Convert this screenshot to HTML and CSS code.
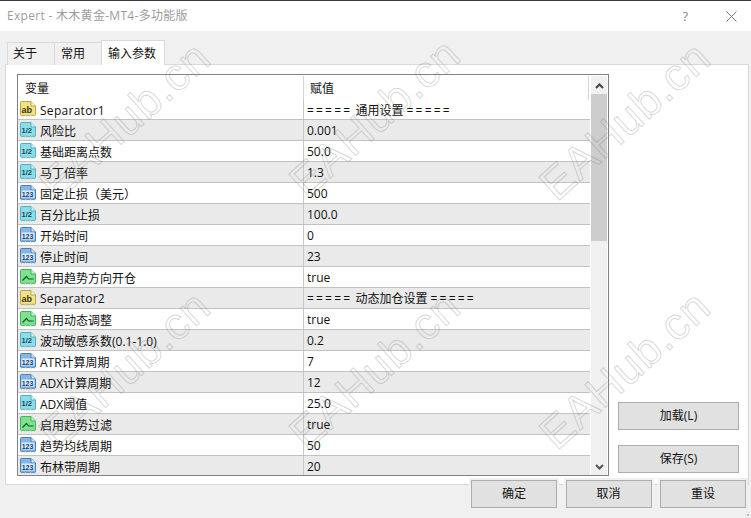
FILE: index.html
```html
<!DOCTYPE html>
<html lang="zh-CN">
<head>
<meta charset="utf-8">
<title>Expert - 木木黄金-MT4-多功能版</title>
<link rel="stylesheet" href="styles.css">
</head>
<body>
<svg class="defs" width="0" height="0" aria-hidden="true">
  <symbol id="ic-str" viewBox="0 0 16 16">
    <path d="M.5 1.5a1 1 0 0 1 1-1H11L15.5 5v9l-1.2.8-1.3-.8-1.3.8-1.2-.8-1.3.8-1.2-.8-1.3.8-1.2-.8-1.3.8-1.2-.8-1.3.8-1.2-.8z" fill="#efe288" stroke="#b9a83f"/>
    <path d="M11 .5V5h4.5" fill="#fff8c8" stroke="#b9a83f"/>
    <text x="1.6" y="11.6" class="ic-t" fill="#3c3410">ab</text>
  </symbol>
  <symbol id="ic-dbl" viewBox="0 0 16 16">
    <path d="M.5 1.5a1 1 0 0 1 1-1H11L15.5 5v9l-1.2.8-1.3-.8-1.3.8-1.2-.8-1.3.8-1.2-.8-1.3.8-1.2-.8-1.3.8-1.2-.8-1.3.8-1.2-.8z" fill="#8fdbe6" stroke="#4fb2c4"/>
    <path d="M11 .5V5h4.5" fill="#d4f6fb" stroke="#4fb2c4"/>
    <text x="1.6" y="10.8" class="ic-t ic-s" fill="#0f4a58">1/2</text>
  </symbol>
  <symbol id="ic-int" viewBox="0 0 16 16">
    <path d="M.5 1.5a1 1 0 0 1 1-1H11L15.5 5v9l-1.2.8-1.3-.8-1.3.8-1.2-.8-1.3.8-1.2-.8-1.3.8-1.2-.8-1.3.8-1.2-.8-1.3.8-1.2-.8z" fill="#86b6e6" stroke="#4a80b6"/>
    <path d="M11 .5V5h4.5" fill="#cfe4f8" stroke="#4a80b6"/>
    <rect x="1.5" y="5.5" width="13" height="7" fill="#dcebf9"/>
    <text x="1.7" y="11.8" class="ic-t ic-n" fill="#123d70">123</text>
  </symbol>
  <symbol id="ic-bool" viewBox="0 0 16 16">
    <path d="M.5 1.5a1 1 0 0 1 1-1H11L15.5 5v9l-1.2.8-1.3-.8-1.3.8-1.2-.8-1.3.8-1.2-.8-1.3.8-1.2-.8-1.3.8-1.2-.8-1.3.8-1.2-.8z" fill="#7fe08f" stroke="#45b35a"/>
    <path d="M11 .5V5h4.5" fill="#c8f5d0" stroke="#45b35a"/>
    <path d="M2.5 11.5l4-4 2 2.5h5" fill="none" stroke="#0d5a22" stroke-width="1.2"/>
  </symbol>
</svg>

<div class="window">
  <header class="titlebar">
    <span class="title">Expert - 木木黄金-MT4-多功能版</span>
    <span class="help">?</span>
    <svg class="close" width="11" height="11" viewBox="0 0 11 11"><path d="M.5.5l10 10M10.5.5l-10 10" stroke="#777" fill="none"/></svg>
  </header>

  <nav class="tabs">
    <span class="tab">关于</span>
    <span class="tab">常用</span>
    <span class="tab active">输入参数</span>
  </nav>

  <section class="panel">
    <div class="grid">
      <div class="rows">
        <div class="head"><span class="h-name">变量</span><span class="h-val">赋值</span></div>
        <div class="row"><span class="name"><svg class="ic"><use href="#ic-str"/></svg><span class="sep">Separator1</span></span><span class="val"><span class="eq">=====</span> 通用设置 <span class="eq">=====</span></span></div>
        <div class="row"><span class="name"><svg class="ic"><use href="#ic-dbl"/></svg>风险比</span><span class="val">0.001</span></div>
        <div class="row"><span class="name"><svg class="ic"><use href="#ic-dbl"/></svg>基础距离点数</span><span class="val">50.0</span></div>
        <div class="row"><span class="name"><svg class="ic"><use href="#ic-dbl"/></svg>马丁倍率</span><span class="val">1.3</span></div>
        <div class="row"><span class="name"><svg class="ic"><use href="#ic-int"/></svg>固定止损（美元）</span><span class="val">500</span></div>
        <div class="row"><span class="name"><svg class="ic"><use href="#ic-dbl"/></svg>百分比止损</span><span class="val">100.0</span></div>
        <div class="row"><span class="name"><svg class="ic"><use href="#ic-int"/></svg>开始时间</span><span class="val">0</span></div>
        <div class="row"><span class="name"><svg class="ic"><use href="#ic-int"/></svg>停止时间</span><span class="val">23</span></div>
        <div class="row"><span class="name"><svg class="ic"><use href="#ic-bool"/></svg>启用趋势方向开仓</span><span class="val">true</span></div>
        <div class="row"><span class="name"><svg class="ic"><use href="#ic-str"/></svg><span class="sep">Separator2</span></span><span class="val"><span class="eq">=====</span> 动态加仓设置 <span class="eq">=====</span></span></div>
        <div class="row"><span class="name"><svg class="ic"><use href="#ic-bool"/></svg>启用动态调整</span><span class="val">true</span></div>
        <div class="row"><span class="name"><svg class="ic"><use href="#ic-dbl"/></svg>波动敏感系数(0.1-1.0)</span><span class="val">0.2</span></div>
        <div class="row"><span class="name"><svg class="ic"><use href="#ic-int"/></svg>ATR计算周期</span><span class="val">7</span></div>
        <div class="row"><span class="name"><svg class="ic"><use href="#ic-int"/></svg>ADX计算周期</span><span class="val">12</span></div>
        <div class="row"><span class="name"><svg class="ic"><use href="#ic-dbl"/></svg>ADX阈值</span><span class="val">25.0</span></div>
        <div class="row"><span class="name"><svg class="ic"><use href="#ic-bool"/></svg>启用趋势过滤</span><span class="val">true</span></div>
        <div class="row"><span class="name"><svg class="ic"><use href="#ic-int"/></svg>趋势均线周期</span><span class="val">50</span></div>
        <div class="row"><span class="name"><svg class="ic"><use href="#ic-int"/></svg>布林带周期</span><span class="val">20</span></div>
      </div>
      <div class="scroll">
        <span class="sb-btn"><svg width="9" height="6" viewBox="0 0 9 6"><path d="M1 5l3.5-3.5L8 5" fill="none" stroke="#444" stroke-width="2"/></svg></span>
        <span class="thumb"></span>
        <span class="track"></span>
        <span class="sb-btn"><svg width="9" height="6" viewBox="0 0 9 6"><path d="M1 1l3.5 3.5L8 1" fill="none" stroke="#555" stroke-width="2"/></svg></span>
      </div>
    </div>
    <div class="side">
      <button class="btn side-btn">加载(L)</button>
      <button class="btn side-btn">保存(S)</button>
    </div>
  </section>

  <footer class="footer">
    <button class="btn foot-btn">确定</button>
    <button class="btn foot-btn">取消</button>
    <button class="btn foot-btn">重设</button>
  </footer>

  <span class="grip"></span>

  <div class="marks" aria-hidden="true">
    <span class="mark m1">EAHub.cn</span>
    <span class="mark m2">EAHub.cn</span>
    <span class="mark m3">EAHub.cn</span>
    <span class="mark m4">EAHub.cn</span>
    <span class="mark m5">EAHub.cn</span>
    <span class="mark m6">EAHub.cn</span>
  </div>
</div>
</body>
</html>
```
FILE: styles.css
```css
* { box-sizing: border-box; }
html, body { margin: 0; padding: 0; }
body {
  font-family: "Open Sans", "Noto Sans CJK SC", sans-serif;
  font-size: 12px;
  color: #111;
  background: #f0f0f0;
}
.defs { position: absolute; }
.window {
  position: relative;
  width: 751px;
  height: 518px;
  overflow: hidden;
  display: flex;
  flex-direction: column;
  background: #f0f0f0;
  border-top: 1px solid #3a3d42;
}
.titlebar {
  height: 30px;
  flex: none;
  background: #fff;
  display: flex;
  align-items: center;
  padding: 0 14px 0 7px;
}
.title { flex: 1; font-size: 12px; letter-spacing: .3px; color: #9c9c9c; line-height: 30px; }
.help { color: #8a8a8a; font-size: 13px; margin-right: 38px; }
.close { display: block; }

.tabs {
  flex: none;
  height: 34px;
  padding: 9px 0 0 7px;
  display: flex;
  align-items: flex-start;
  position: relative;
  z-index: 1;
}
.tab {
  width: 48px;
  height: 23px;
  margin-top: 2px;
  padding-left: 6px;
  border: 1px solid #d9d9d9;
  border-bottom: none;
  line-height: 21px;
  margin-right: -1px;
  background: #f0f0f0;
}
.tab:first-child { padding-left: 5px; }
.tab.active {
  width: 64px;
  height: 25px;
  margin-top: 0;
  padding-left: 6px;
  background: #fff;
  line-height: 25px;
}

.panel {
  flex: none;
  height: 421px;
  margin: -1px 2px 0 5px;
  border: 1px solid #d9d9d9;
  background: #fff;
  display: flex;
  padding: 9px 0 0 11px;
}
.grid {
  width: 592px;
  height: 402px;
  border: 1px solid #82828c;
  display: flex;
  overflow: hidden;
  flex: none;
  padding-right: 1px;
}
.rows { width: 572px; flex: none; overflow: hidden; }
.head {
  display: flex;
  height: 25px;
  border-top: 1px solid #fff;
  line-height: 26px;
}
.h-name { width: 285px; padding-left: 7px; flex: none; }
.h-val {
  flex: 1;
  padding-left: 6px;
  border-left: 1px solid #d4d4d4;
  border-right: 1px solid #d4d4d4;
  margin-right: 1px;
}
.row {
  display: flex;
  height: 21px;
  border-bottom: 1px solid #c2c2c2;
}
.row:nth-child(odd) { background: #eaeaea; }
.row:nth-child(2) { height: 20px; }
.name {
  width: 285px;
  flex: none;
  display: flex;
  align-items: center;
  padding: 1px 0 0 2px;
  white-space: nowrap;
}
.ic { position: relative; top: -1px; width: 16px; height: 16px; margin-right: 4px; flex: none; }
.val {
  flex: 1;
  padding: 2px 0 0 3px;
  line-height: 18px;
  border-left: 1px solid #c8c8c8;
  white-space: nowrap;
}
.sep { letter-spacing: .28px; }
.eq { letter-spacing: 2.2px; }
.ic-t { font: 700 9px "Liberation Sans", sans-serif; }
.ic-s { font-size: 7.5px; }
.ic-n { font-size: 7px; }

.scroll {
  width: 16px;
  margin-left: 1px;
  padding-top: 1px;
  display: flex;
  flex-direction: column;
  background: #f0f0f0;
  border-top: 1px solid #fff;
}
.sb-btn { height: 17px; flex: none; display: flex; align-items: center; justify-content: center; }
.thumb { height: 147px; flex: none; background: #cdcdcd; }
.track { flex: 1; }

.btn {
  font: inherit;
  color: #111;
  background: #e1e1e1;
  border: 1px solid #adadad;
  padding: 0 0 2px;
  display: block;
}
.side {
  width: 121px;
  margin-left: 9px;
  padding-top: 328px;
  display: flex;
  flex-direction: column;
  gap: 15px;
}
.side-btn { width: 121px; height: 28px; flex: none; }
.footer {
  flex: none;
  margin-top: -5px;
  padding-left: 471px;
  display: flex;
  gap: 8.5px;
  position: relative;
}
.foot-btn { width: 86px; height: 28px; box-shadow: 0 0 0 2px #f0f0f0; }
.grip {
  position: absolute;
  right: 1px;
  bottom: 1px;
  width: 6px;
  height: 6px;
  background: radial-gradient(circle at 1px 1px, #bdbdbd 1px, transparent 1px) 0 0 / 3px 3px;
  clip-path: polygon(100% 0, 100% 100%, 0 100%);
}

.marks { position: absolute; inset: 0; pointer-events: none; z-index: 2; }
.mark {
  position: absolute;
  width: 240px;
  margin: -30px 0 0 -120px;
  text-align: center;
  font: 45px/60px "Liberation Sans", sans-serif;
  letter-spacing: 1px;
  color: transparent;
  -webkit-text-stroke: 1px rgba(120, 120, 120, .3);
  transform: rotate(-42deg);
}
.m1 { left: 125px; top: 120px; }
.m2 { left: 375px; top: 117px; }
.m3 { left: 625px; top: 120px; }
.m4 { left: 125px; top: 369px; }
.m5 { left: 375px; top: 369px; }
.m6 { left: 625px; top: 369px; }
```
